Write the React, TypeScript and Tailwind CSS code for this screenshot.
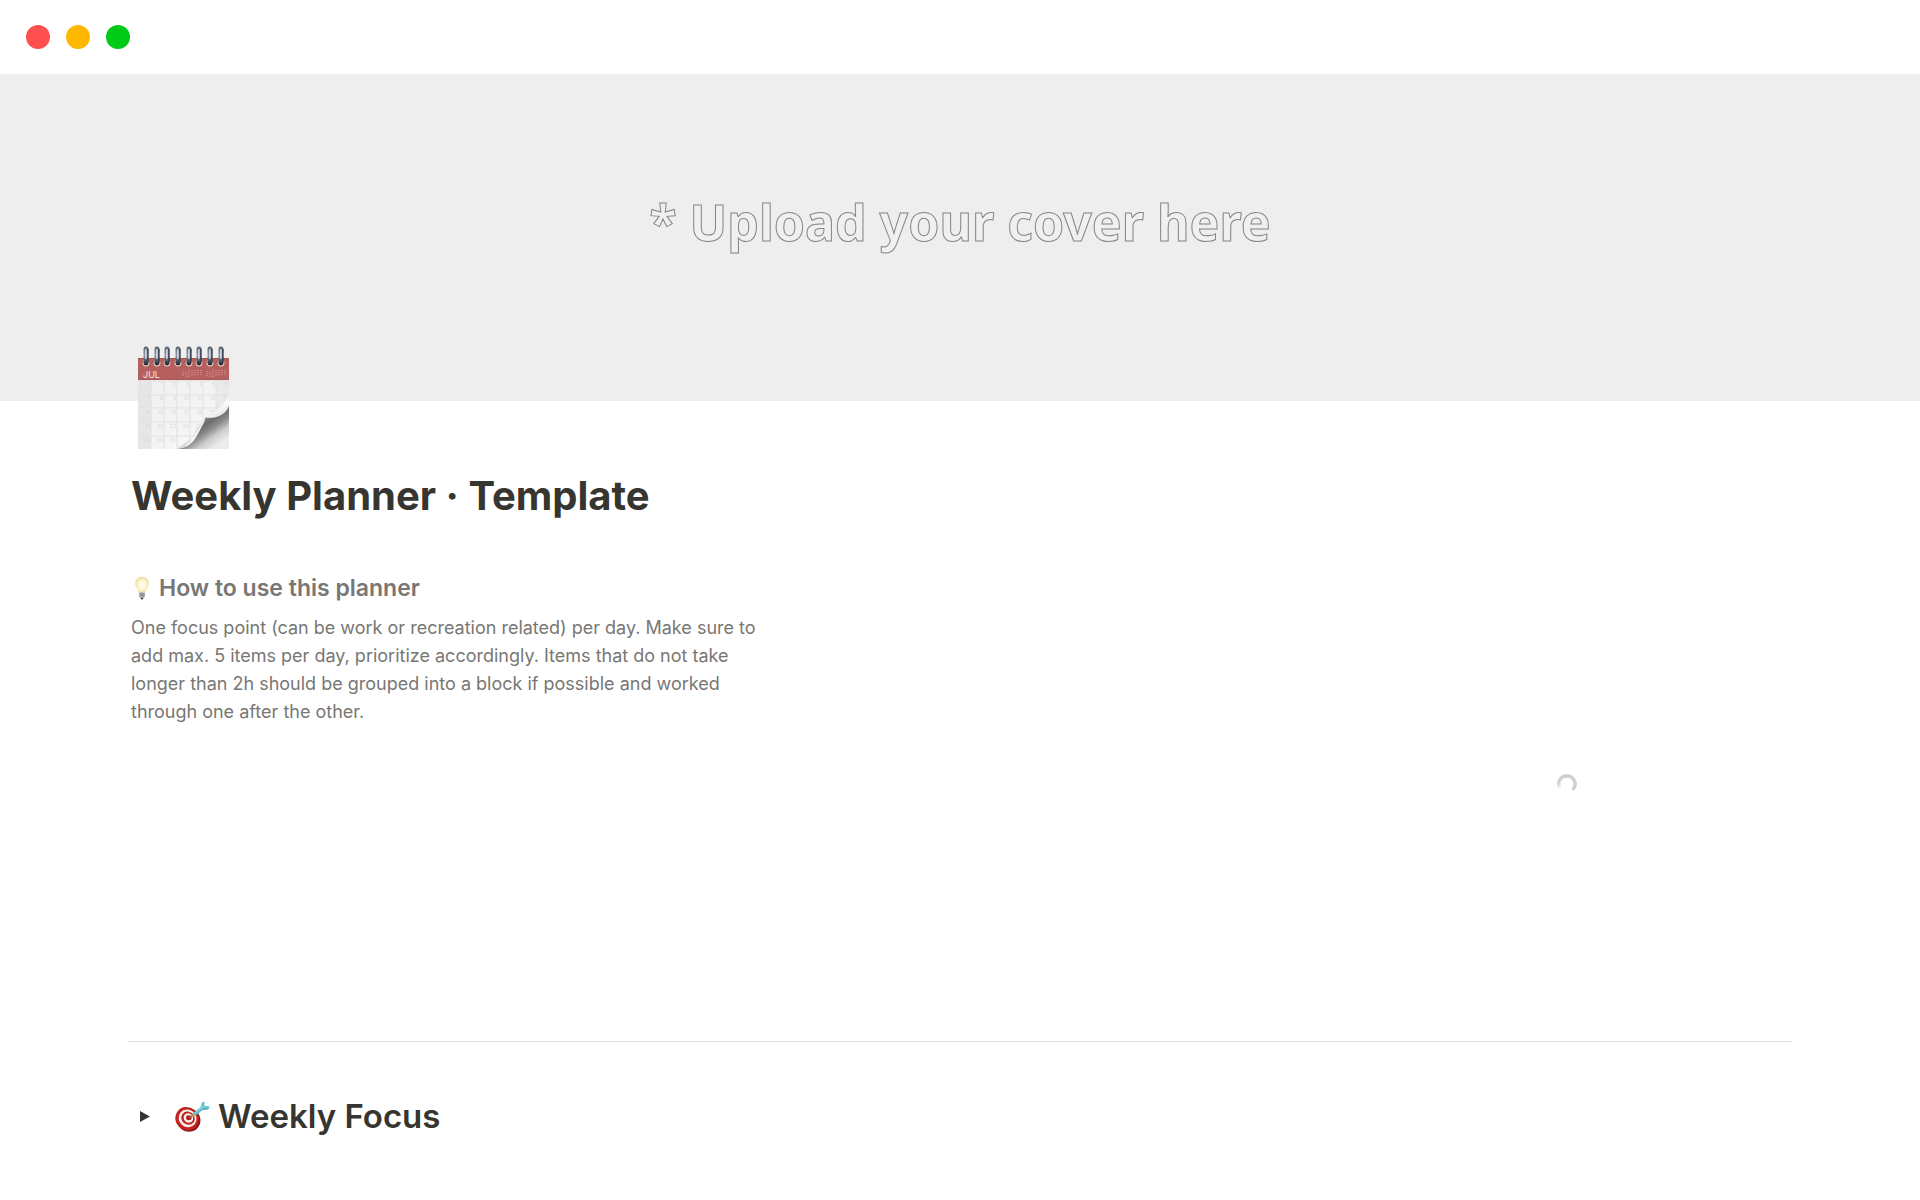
import { useState } from "react";

const RINGS = [8, 19, 29, 40, 51, 61, 72, 83];
const COLUMNS = [13, 26, 39, 52, 65, 78];
const ROWS = [35, 49, 62, 76, 90];

function CalendarIcon() {
    return (
        <svg viewBox="0 0 91 104" className="w-[91px] h-[104px]" role="img" aria-label="Calendar">
            <defs>
                <linearGradient id="paper" x1="0" y1="0" x2="1" y2="1">
                    <stop offset="0" stopColor="#f0f0f0" />
                    <stop offset="0.6" stopColor="#f4f4f4" />
                    <stop offset="1" stopColor="#ffffff" />
                </linearGradient>
                <linearGradient id="curl" x1="64" y1="72" x2="82" y2="98" gradientUnits="userSpaceOnUse">
                    <stop offset="0" stopColor="#9a9a9a" />
                    <stop offset="0.22" stopColor="#6a6a6a" />
                    <stop offset="0.45" stopColor="#8c8c8c" />
                    <stop offset="0.7" stopColor="#cccccc" />
                    <stop offset="1" stopColor="#ececec" />
                </linearGradient>
                <linearGradient id="fold" x1="72" y1="54" x2="82" y2="73" gradientUnits="userSpaceOnUse">
                    <stop offset="0" stopColor="#ffffff" stopOpacity="0" />
                    <stop offset="0.5" stopColor="#fbfbfb" />
                    <stop offset="1" stopColor="#dcdcdc" />
                </linearGradient>
                <linearGradient id="ring" x1="0" y1="0" x2="0" y2="1">
                    <stop offset="0" stopColor="#5a626c" />
                    <stop offset="0.5" stopColor="#8b98a8" />
                    <stop offset="1" stopColor="#252b33" />
                </linearGradient>
            </defs>
            <rect y="33" width="91" height="70" fill="url(#paper)" />
            <rect y="33" width="13" height="70" fill="#e6e6e6" />
            <rect x="78" y="33" width="13" height="70" fill="#eaeaea" />
            {COLUMNS.map((x) => (
                <path key={x} d={`M${x} 34V103`} stroke="#e1e1e1" strokeWidth="1" />
            ))}
            {ROWS.map((y) => (
                <path key={y} d={`M0 ${y}H91`} stroke="#e1e1e1" strokeWidth="1" />
            ))}
            {[0, 1, 2, 3, 4].map((row) =>
                [0, 1, 2, 3, 4, 5, 6].map((col) => {
                    const day = row * 7 + col;
                    if (day < 1 || day > 30) return null;
                    return (
                        <text key={day} x={col * 13 + 12} y={row * 14 + 40} textAnchor="end" fontSize="5" fill="#dadada" fontFamily="Inter, sans-serif">
                            {day}
                        </text>
                    );
                })
            )}
            <path d="M91 48C86 60 78 67 64 72L54 92L38 103H46L66 76L91 66Z" fill="url(#fold)" />
            <path d="M40 103C54 101 57 93 62 84C66 77 67 75 67 71.5C77 73 87 70 91 60V103Z" fill="url(#curl)" />
            <rect y="12" width="91" height="22" fill="#b5605f" />
            <path d="M0 12.5H91" stroke="#a45554" />
            <path d="M0 33.5H91" stroke="#a85a59" />
            <text x="5" y="32" fontSize="9" fill="#f6e2e2" fontFamily="Inter, sans-serif">
                JUL
            </text>
            <path d="M45 25V31M48 26V31M51 24V31M54 25V31M57 24V30M60 24V30M63 24V29M69 25V31M72 26V31M75 24V31M78 25V31M81 24V30M84 24V30M87 24V29" stroke="#d9a5a5" strokeWidth="1" strokeDasharray="1 1" />
            {RINGS.map((x) => (
                <g key={x}>
                    <circle cx={x} cy="17" r="3.4" fill="#ecd6d6" />
                    <circle cx={x} cy="17" r="2.4" fill="#2c2326" />
                    <rect x={x - 2.5} y="0.5" width="5" height="18" rx="2.5" fill="url(#ring)" />
                    <path d={`M${x + 1.9} 3V16`} stroke="#2b3540" strokeWidth="1.2" />
                    <rect x={x - 0.8} y="3" width="1.4" height="10" rx="0.7" fill="#dbe6f0" />
                </g>
            ))}
        </svg>
    );
}

function BulbIcon() {
    return (
        <svg viewBox="0 0 14 24" className="w-[14px] h-6 shrink-0" aria-hidden="true">
            <defs>
                <radialGradient id="glow" cx="0.5" cy="0.5" r="0.55">
                    <stop offset="0" stopColor="#fffef6" />
                    <stop offset="0.55" stopColor="#fdf6d2" />
                    <stop offset="1" stopColor="#eed993" />
                </radialGradient>
            </defs>
            <path d="M7 1C3.2 1 0.5 3.7 0.5 7.2C0.5 10.8 3.6 12.5 4.1 16.8H9.9C10.4 12.5 13.5 10.8 13.5 7.2C13.5 3.7 10.8 1 7 1Z" fill="url(#glow)" stroke="#ecd896" strokeWidth="0.5" />
            <path d="M4.3 16.6H9.7V20.6L8.6 22H5.4L4.3 20.6Z" fill="#a9a9a7" />
            <path d="M4.3 18H9.7M4.3 20H9.7" stroke="#77777a" strokeWidth="0.7" />
            <path d="M5.5 22H8.5L7.6 23.4H6.4Z" fill="#3a3a3a" />
        </svg>
    );
}

function TargetIcon() {
    return (
        <svg viewBox="0 -2 36 34" className="w-9 h-[34px] shrink-0" aria-hidden="true">
            <ellipse cx="14.6" cy="19" rx="12" ry="11.6" fill="#8f1815" transform="rotate(35 14.6 19)" />
            <ellipse cx="13" cy="17.6" rx="12" ry="11.3" fill="#c4241f" transform="rotate(40 13 17.6)" />
            <ellipse cx="13.6" cy="17.4" rx="9.2" ry="8.6" fill="#f7f1ef" transform="rotate(40 13.6 17.4)" />
            <ellipse cx="14" cy="17.2" rx="7" ry="6.4" fill="#c4241f" transform="rotate(40 14 17.2)" />
            <ellipse cx="14.4" cy="17" rx="4.9" ry="4.5" fill="#f7f1ef" transform="rotate(40 14.4 17)" />
            <ellipse cx="14.8" cy="16.8" rx="2.8" ry="2.5" fill="#b5201c" />
            <path d="M15 17L20 13.5" stroke="#8a6a3a" strokeWidth="1.2" />
            <path d="M18 15.6L19.3 11.6L22 14.6Z" fill="#e0a33a" />
            <path d="M19.4 11.7L27 6L29 8.4L21.8 14.6C20.6 14.8 19.2 13.2 19.4 11.7Z" fill="#58b9c9" />
            <path d="M26.4 6.6L28.2 1L30.6 0.8L30.4 4.8L35.6 5.4L34.8 7.8L28.8 8.8Z" fill="#63c3d1" />
            <path d="M20.6 12.4L30.4 4.8" stroke="#a8e2ea" strokeWidth="0.9" />
            <path d="M28.6 8.6L34.4 7.8" stroke="#2f8798" strokeWidth="0.8" />
        </svg>
    );
}

function Spinner() {
    return (
        <svg viewBox="0 0 20 20" className="w-5 h-5" role="img" aria-label="Loading">
            <defs>
                <linearGradient id="spin" x1="0" y1="0" x2="0" y2="1">
                    <stop offset="0" stopColor="#cfcfcf" />
                    <stop offset="0.5" stopColor="#d2d2d2" />
                    <stop offset="0.95" stopColor="#d2d2d2" stopOpacity="0" />
                </linearGradient>
            </defs>
            <path d="M10 2A8 8 0 0 0 4.6 16.2" fill="none" stroke="url(#spin)" strokeWidth="3.4" />
            <path d="M10 2A8 8 0 0 1 16.6 14.6" fill="none" stroke="#cfcfcf" strokeWidth="3.4" strokeLinecap="round" />
        </svg>
    );
}

export default function WeeklyPlannerPage() {
    const [isFocusOpen, setIsFocusOpen] = useState(false);

    return (
        <div className="min-h-screen bg-white font-['Inter',sans-serif] text-[#37352f]">
            <header className="flex items-center gap-4 h-[74px] px-[26px]">
                <span className="w-6 h-6 rounded-full bg-[#ff4f4f]" />
                <span className="w-6 h-6 rounded-full bg-[#ffb800]" />
                <span className="w-6 h-6 rounded-full bg-[#00ca18]" />
            </header>

            <div className="flex items-center justify-center h-[327px] pb-8 bg-[#eeeeee]">
                <p className="text-[50px] leading-[60px] font-bold font-['Noto_Sans',sans-serif] text-[#f0f0f0] [-webkit-text-stroke:1px_#858585]">
                    * Upload your cover here
                </p>
            </div>

            <main className="px-32 pb-12">
                <div className="relative -mt-[55px] px-[10px]">
                    <CalendarIcon />
                </div>
                <h1 className="mt-5 px-[3px] text-[40px] leading-[52px] font-bold">Weekly Planner · Template</h1>

                <div className="flex justify-between mt-12 min-h-[471px]">
                    <section className="w-[39%] px-[3px]">
                        <h3 className="flex items-center gap-[10px] px-1 text-[23px] leading-9 font-semibold text-[#787774]">
                            <BulbIcon />
                            How to use this planner
                        </h3>
                        <p className="mt-2 text-lg leading-7 text-[#787774]">
                            One focus point (can be work or recreation related) per day. Make sure to add max. 5 items per day, prioritize accordingly. Items that do not take longer than 2h should be grouped into a block if possible and worked through one after the other.
                        </p>
                    </section>
                    <div className="flex items-center justify-center w-[27%] pb-11">
                        <Spinner />
                    </div>
                </div>

                <hr className="border-t border-[#dededc]" />

                <div className="flex items-center gap-6 mt-[50px] px-3">
                    <button
                        aria-label="Toggle Weekly Focus"
                        aria-expanded={isFocusOpen}
                        onClick={() => setIsFocusOpen(!isFocusOpen)}
                    >
                        <svg viewBox="0 0 10 11" className="w-[10px] h-[11px]" aria-hidden="true">
                            <path d="M0 0L10 5.5L0 11Z" fill="#37352f" />
                        </svg>
                    </button>
                    <h2 className="flex items-center gap-2 text-[33px] leading-[48px] font-semibold">
                        <TargetIcon />
                        Weekly Focus
                    </h2>
                </div>
            </main>
        </div>
    );
}
